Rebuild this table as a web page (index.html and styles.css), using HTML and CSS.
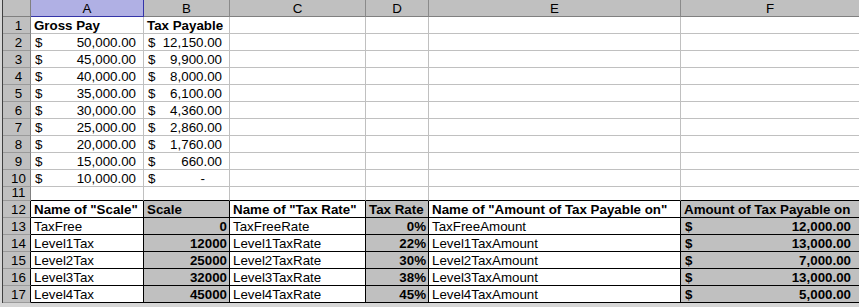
FILE: index.html
```html
<!DOCTYPE html>
<html>
<head>
<meta charset="utf-8">
<link rel="stylesheet" href="styles.css">
</head>
<body>
<div class="sheet">
  <div class="grid">
    <div class="corner"></div>
    <div class="colhdr sel">A</div>
    <div class="colhdr">B</div>
    <div class="colhdr">C</div>
    <div class="colhdr">D</div>
    <div class="colhdr">E</div>
    <div class="colhdr">F</div>

    <div class="rowhdr">1</div>
    <div class="cell b">Gross Pay</div>
    <div class="cell b">Tax Payable</div>
    <div class="cell"></div><div class="cell"></div><div class="cell"></div><div class="cell"></div>

    <div class="rowhdr">2</div>
    <div class="cell acc"><span>$</span><span>50,000.00</span></div>
    <div class="cell acc"><span>$</span><span>12,150.00</span></div>
    <div class="cell"></div><div class="cell"></div><div class="cell"></div><div class="cell"></div>

    <div class="rowhdr">3</div>
    <div class="cell acc"><span>$</span><span>45,000.00</span></div>
    <div class="cell acc"><span>$</span><span>9,900.00</span></div>
    <div class="cell"></div><div class="cell"></div><div class="cell"></div><div class="cell"></div>

    <div class="rowhdr">4</div>
    <div class="cell acc"><span>$</span><span>40,000.00</span></div>
    <div class="cell acc"><span>$</span><span>8,000.00</span></div>
    <div class="cell"></div><div class="cell"></div><div class="cell"></div><div class="cell"></div>

    <div class="rowhdr">5</div>
    <div class="cell acc"><span>$</span><span>35,000.00</span></div>
    <div class="cell acc"><span>$</span><span>6,100.00</span></div>
    <div class="cell"></div><div class="cell"></div><div class="cell"></div><div class="cell"></div>

    <div class="rowhdr">6</div>
    <div class="cell acc"><span>$</span><span>30,000.00</span></div>
    <div class="cell acc"><span>$</span><span>4,360.00</span></div>
    <div class="cell"></div><div class="cell"></div><div class="cell"></div><div class="cell"></div>

    <div class="rowhdr">7</div>
    <div class="cell acc"><span>$</span><span>25,000.00</span></div>
    <div class="cell acc"><span>$</span><span>2,860.00</span></div>
    <div class="cell"></div><div class="cell"></div><div class="cell"></div><div class="cell"></div>

    <div class="rowhdr">8</div>
    <div class="cell acc"><span>$</span><span>20,000.00</span></div>
    <div class="cell acc"><span>$</span><span>1,760.00</span></div>
    <div class="cell"></div><div class="cell"></div><div class="cell"></div><div class="cell"></div>

    <div class="rowhdr">9</div>
    <div class="cell acc"><span>$</span><span>15,000.00</span></div>
    <div class="cell acc"><span>$</span><span>660.00</span></div>
    <div class="cell"></div><div class="cell"></div><div class="cell"></div><div class="cell"></div>

    <div class="rowhdr">10</div>
    <div class="cell acc"><span>$</span><span>10,000.00</span></div>
    <div class="cell acc"><span>$</span><span class="dash">-</span></div>
    <div class="cell"></div><div class="cell"></div><div class="cell"></div><div class="cell"></div>

    <div class="rowhdr">11</div>
    <div class="cell topb"></div><div class="cell topb"></div><div class="cell topb"></div><div class="cell topb"></div><div class="cell topb"></div><div class="cell topb"></div>

    <div class="rowhdr tb">12</div>
    <div class="cell t b">Name of "Scale"</div>
    <div class="cell t b fill">Scale</div>
    <div class="cell t b">Name of "Tax Rate"</div>
    <div class="cell t b fill">Tax Rate</div>
    <div class="cell t b">Name of "Amount of Tax Payable on"</div>
    <div class="cell t b fill">Amount of Tax Payable on</div>

    <div class="rowhdr tb">13</div>
    <div class="cell t">TaxFree</div>
    <div class="cell t b fill num">0</div>
    <div class="cell t">TaxFreeRate</div>
    <div class="cell t b fill num">0%</div>
    <div class="cell t">TaxFreeAmount</div>
    <div class="cell t b fill acc last"><span>$</span><span>12,000.00</span></div>

    <div class="rowhdr tb">14</div>
    <div class="cell t">Level1Tax</div>
    <div class="cell t b fill num">12000</div>
    <div class="cell t">Level1TaxRate</div>
    <div class="cell t b fill num">22%</div>
    <div class="cell t">Level1TaxAmount</div>
    <div class="cell t b fill acc last"><span>$</span><span>13,000.00</span></div>

    <div class="rowhdr tb">15</div>
    <div class="cell t">Level2Tax</div>
    <div class="cell t b fill num">25000</div>
    <div class="cell t">Level2TaxRate</div>
    <div class="cell t b fill num">30%</div>
    <div class="cell t">Level2TaxAmount</div>
    <div class="cell t b fill acc last"><span>$</span><span>7,000.00</span></div>

    <div class="rowhdr tb">16</div>
    <div class="cell t">Level3Tax</div>
    <div class="cell t b fill num">32000</div>
    <div class="cell t">Level3TaxRate</div>
    <div class="cell t b fill num">38%</div>
    <div class="cell t">Level3TaxAmount</div>
    <div class="cell t b fill acc last"><span>$</span><span>13,000.00</span></div>

    <div class="rowhdr tb">17</div>
    <div class="cell t">Level4Tax</div>
    <div class="cell t b fill num">45000</div>
    <div class="cell t">Level4TaxRate</div>
    <div class="cell t b fill num">45%</div>
    <div class="cell t">Level4TaxAmount</div>
    <div class="cell t b fill acc last"><span>$</span><span>5,000.00</span></div>
  </div>
</div>
</body>
</html>
```

FILE: styles.css
```css
html, body {
  margin: 0;
  padding: 0;
  background: #ffffff;
}
.sheet {
  width: 859px;
  height: 307px;
  overflow: hidden;
  padding-left: 2px;
  box-sizing: border-box;
  background: #d6d6d6;
}
.grid {
  display: grid;
  grid-template-columns: 28px 113px 86px 136px 63px 252px 179px;
  grid-template-rows: 17px repeat(10, 17px) 14px repeat(6, 17px);
  border-left: 1px solid #404040;
  font-family: "Liberation Sans", Arial, sans-serif;
  font-size: 13.33px;
  color: #000;
  background: #fff;
  width: max-content;
}
.corner {
  background: #c0c0c0;
  border-right: 1px solid #808080;
  border-bottom: 1px solid #808080;
}
.colhdr {
  background: #c0c0c0;
  border-right: 1px solid #8a8a8a;
  border-bottom: 1px solid #808080;
  display: flex;
  align-items: center;
  justify-content: center;
  line-height: 1;
  padding-top: 1px;
  box-sizing: border-box;
}
.colhdr.sel {
  background: #b0b0e4;
  border-right-color: #3535a8;
  border-bottom-color: #3535a8;
}
.rowhdr {
  background: #c0c0c0;
  border-right: 1px solid #808080;
  border-bottom: 1px solid #9a9a9a;
  display: flex;
  align-items: flex-end;
  justify-content: center;
  padding-left: 4px;
  line-height: 15px;
  box-sizing: border-box;
}
.rowhdr.tb {
  border-right-color: #000;
}
.cell {
  border-right: 1px solid #c0c0c0;
  border-bottom: 1px solid #c0c0c0;
  display: flex;
  align-items: flex-end;
  padding: 0 2px 0 3px;
  line-height: 15px;
  white-space: nowrap;
  overflow: visible;
  box-sizing: border-box;
}
.cell.b {
  font-weight: bold;
}
.cell.t {
  border-right-color: #000;
  border-bottom-color: #000;
}
.cell.topb {
  border-bottom-color: #000;
}
.cell.fill {
  background: #c0c0c0;
}
.cell.num {
  justify-content: flex-end;
  padding-right: 2px;
}
.cell.acc {
  justify-content: space-between;
  padding-left: 4px;
  padding-right: 7px;
}
.cell.acc.last {
  padding-right: 8px;
}
.cell .dash {
  padding-right: 17px;
}
```
